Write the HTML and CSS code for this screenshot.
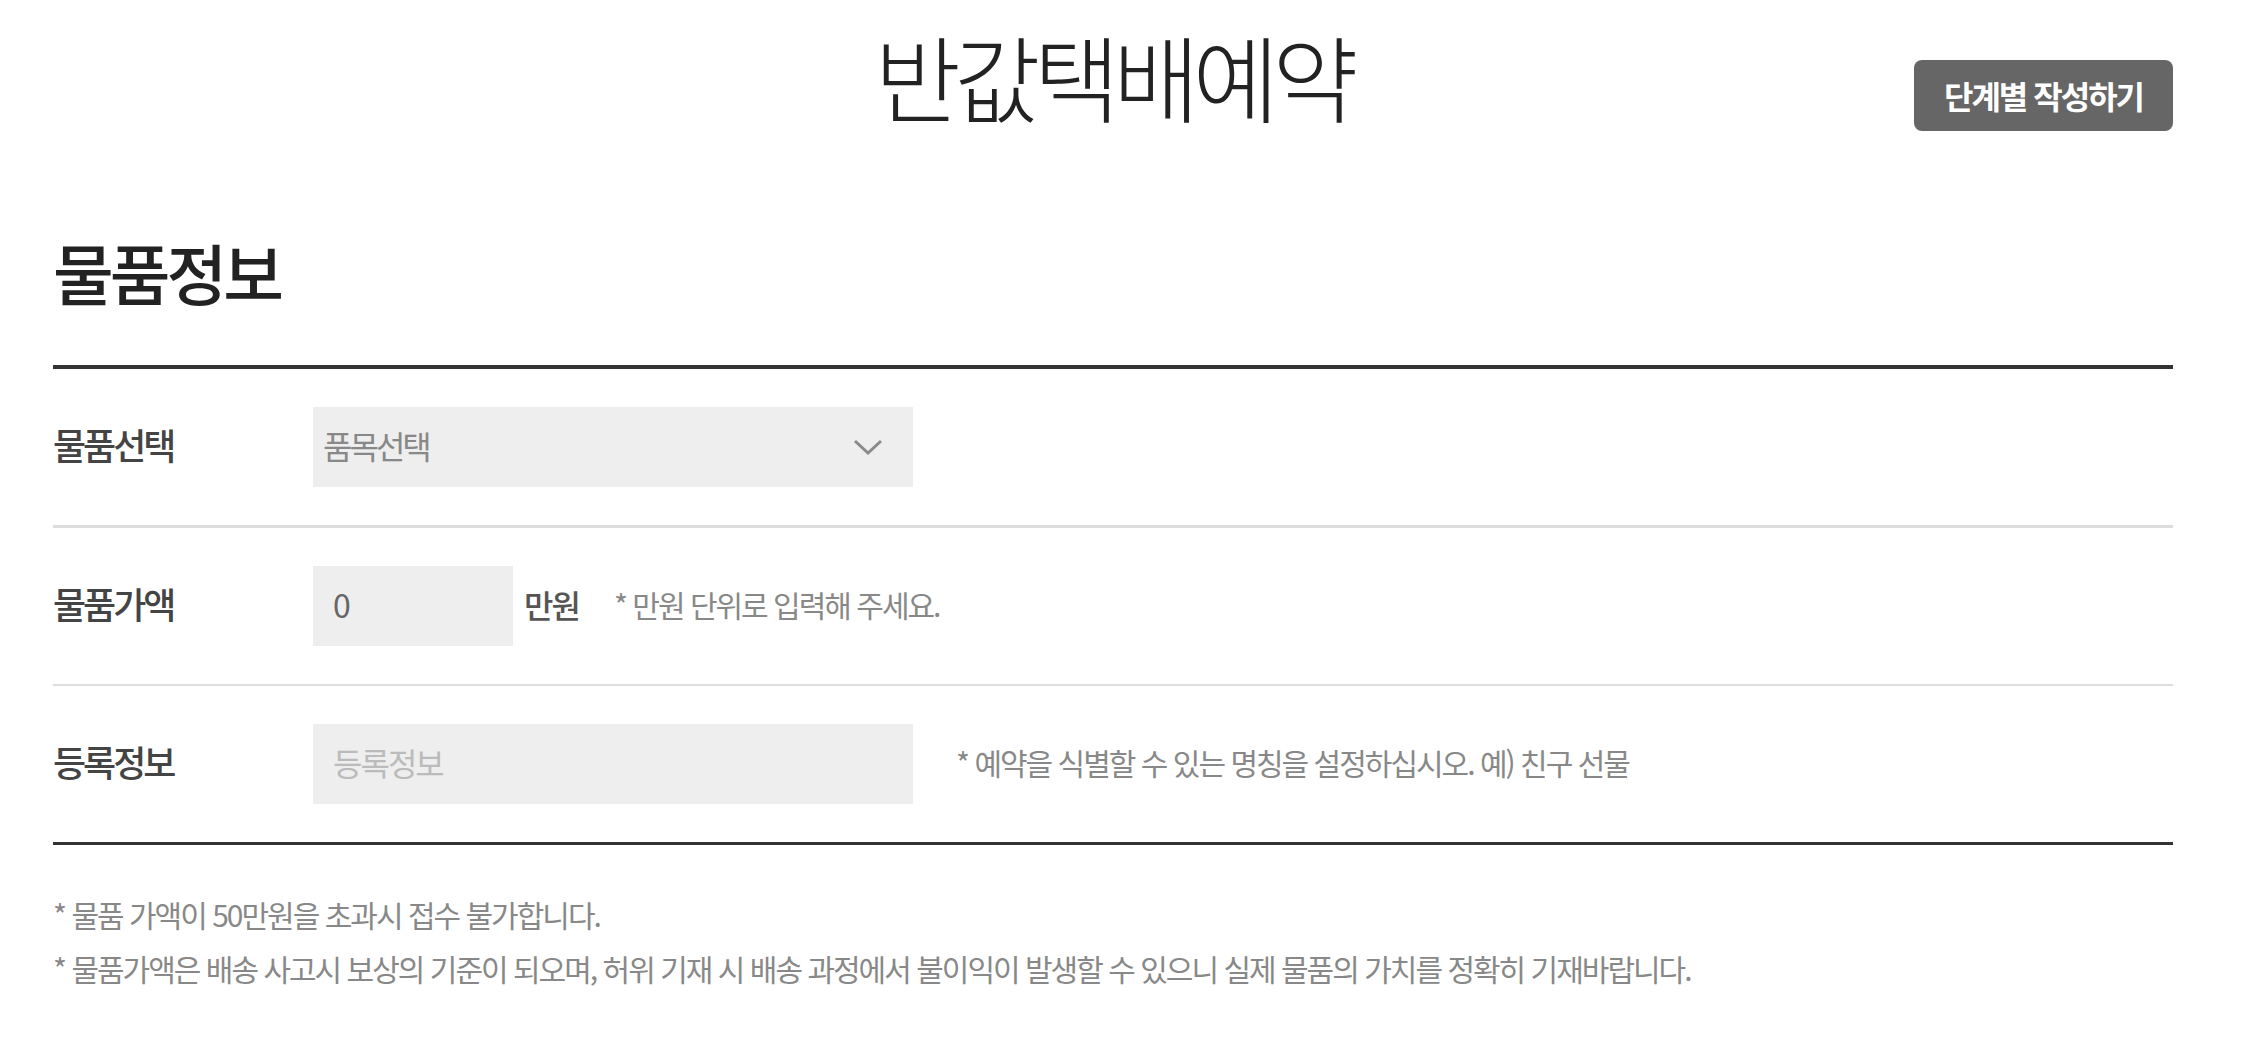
FILE: index.html
```html
<!DOCTYPE html>
<html lang="ko">
<head>
  <meta charset="UTF-8">
  <title>반값택배예약</title>
  <meta name="viewport" content="width=device-width, initial-scale=1.0">
  <link rel="stylesheet" href="styles.css">
</head>
<body>
  <div class="page">
    <header class="top">
      <div></div>
      <h1 class="title">반값택배예약</h1>
      <button class="step-button" type="button">단계별 작성하기</button>
    </header>

    <h2 class="section-title">물품정보</h2>

    <div class="form">
      <div class="row row-first">
        <label class="row-label" for="item">물품선택</label>
        <div class="row-field">
          <div class="select-wrap">
            <select id="item" class="select">
              <option>품목선택</option>
              <option>의류</option>
              <option>도서</option>
              <option>잡화</option>
            </select>
            <svg class="chevron" width="30" height="17" viewBox="0 0 30 17" aria-hidden="true">
              <polyline points="2,2 15,14 28,2" fill="none" stroke="#8a8a8a" stroke-width="3"/>
            </svg>
          </div>
        </div>
      </div>

      <div class="row row-second">
        <label class="row-label" for="price">물품가액</label>
        <div class="row-field">
          <input type="text" id="price" class="input input-price" value="0">
          <span class="unit">만원</span>
          <span class="hint hint-price">* 만원 단위로 입력해 주세요.</span>
        </div>
      </div>

      <div class="row row-last">
        <label class="row-label" for="alias">등록정보</label>
        <div class="row-field">
          <input type="text" id="alias" class="input input-alias" placeholder="등록정보">
          <span class="hint hint-alias">* 예약을 식별할 수 있는 명칭을 설정하십시오. 예) 친구 선물</span>
        </div>
      </div>
    </div>

    <ul class="notes">
      <li>* 물품 가액이 50만원을 초과시 접수 불가합니다.</li>
      <li>* 물품가액은 배송 사고시 보상의 기준이 되오며, 허위 기재 시 배송 과정에서 불이익이 발생할 수 있으니 실제 물품의 가치를 정확히 기재바랍니다.</li>
    </ul>
  </div>
</body>
</html>
```

FILE: styles.css
```css
body {
  margin: 0;
  background-color: #fff;
  color: #222;
  font-family: "Noto Sans CJK KR", "Noto Sans", sans-serif;
}

.page {
  width: 2120px;
  margin-left: 53px;
}

.top {
  display: grid;
  grid-template-columns: 1fr auto 1fr;
  align-items: center;
  height: 170px;
}

.title {
  margin: 0;
  font-size: 94px;
  font-weight: 300;
  line-height: 1;
  letter-spacing: -7px;
  color: #222;
  margin-top: -20px;
}

.step-button {
  justify-self: end;
  width: 259px;
  height: 71px;
  margin-top: 20px;
  background-color: #666;
  color: #fff;
  border: none;
  border-radius: 8px;
  font-family: inherit;
  font-size: 32px;
  font-weight: 700;
  letter-spacing: -2px;
  cursor: pointer;
}

.section-title {
  margin: 68px 0 61px;
  font-size: 66px;
  font-weight: 500;
  line-height: 1;
  letter-spacing: -4px;
  color: #222;
}

.form {
  border-top: 4px solid #333;
  border-bottom: 3px solid #333;
}

.row {
  display: grid;
  grid-template-columns: 260px 1fr;
  align-items: center;
  padding: 38px 0;
}

.row-first {
  border-bottom: 3px solid #ddd;
}

.row-second {
  border-bottom: 2px solid #ddd;
}

.row-label {
  padding-bottom: 6px;
  font-size: 36px;
  font-weight: 500;
  letter-spacing: -3px;
  color: #444;
}

.row-field {
  display: flex;
  align-items: center;
}

.select-wrap {
  position: relative;
  width: 600px;
}

.select {
  display: block;
  width: 100%;
  height: 80px;
  padding: 0 10px 4px;
  border: none;
  border-radius: 0;
  background-color: #eee;
  color: #888;
  font-family: inherit;
  font-size: 32px;
  letter-spacing: -3px;
  appearance: none;
  -webkit-appearance: none;
}

.chevron {
  position: absolute;
  right: 30px;
  top: 32px;
  pointer-events: none;
}

.input {
  height: 80px;
  padding: 0 20px 4px;
  border: none;
  background-color: #eee;
  color: #666;
  font-family: inherit;
  font-size: 32px;
  letter-spacing: -2px;
  box-sizing: border-box;
}

.input::placeholder {
  color: #bbb;
}

.input-price {
  width: 200px;
}

.input-alias {
  width: 600px;
}

.unit {
  margin-left: 11px;
  padding-bottom: 4px;
  font-size: 32px;
  font-weight: 500;
  letter-spacing: -2px;
  color: #555;
}

.hint {
  padding-bottom: 4px;
  font-size: 30px;
  letter-spacing: -2px;
  color: #888;
}

.hint-price {
  margin-left: 35px;
}

.hint-alias {
  margin-left: 43px;
}

.notes {
  list-style: none;
  margin: 42px 0 0;
  padding: 0;
  font-size: 30px;
  letter-spacing: -2px;
  line-height: 54px;
  color: #888;
}
```
